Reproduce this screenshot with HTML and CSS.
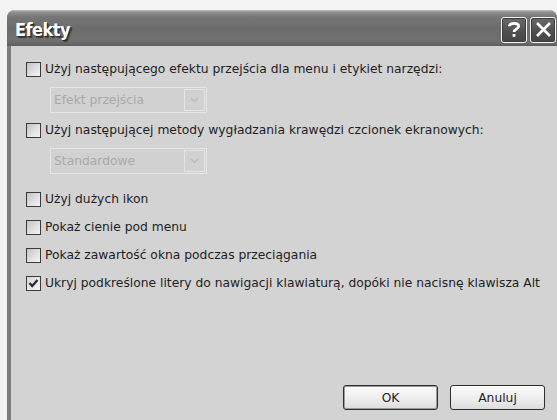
FILE: index.html
```html
<!DOCTYPE html>
<html lang="pl">
<head>
<meta charset="utf-8">
<title>Efekty</title>
<link rel="stylesheet" href="styles.css">
</head>
<body>
<div class="window">
  <div class="titlebar">
    <span class="title">Efekty</span>
    <div class="caption-buttons">
      <button class="cap-btn" aria-label="Pomoc">
        <svg width="14" height="17" viewBox="0 0 14 17"><path d="M2.3 5.2 C2.3 1.3 11.7 1.3 11.7 5.2 C11.7 8 7 8 7 11" fill="none" stroke="#fff" stroke-width="2.7"/><rect x="5.6" y="13" width="2.8" height="2.8" fill="#fff"/></svg>
      </button>
      <button class="cap-btn" aria-label="Zamknij">
        <svg width="17" height="17" viewBox="0 0 17 17"><path d="M2 2 L15 15 M15 2 L2 15" stroke="#fff" stroke-width="2.7"/></svg>
      </button>
    </div>
  </div>
  <div class="client">
    <div class="options">
      <label class="check"><span class="box"></span>Użyj następującego efektu przejścia dla menu i etykiet narzędzi:</label>
      <div class="combo"><span class="combo-text">Efekt przejścia</span><span class="combo-arrow"><svg width="9" height="6" viewBox="0 0 9 6"><path d="M1 1 L4.5 4.5 L8 1" fill="none" stroke="#bdbdbd" stroke-width="1.6"/></svg></span></div>
      <label class="check"><span class="box"></span>Użyj następującej metody wygładzania krawędzi czcionek ekranowych:</label>
      <div class="combo"><span class="combo-text">Standardowe</span><span class="combo-arrow"><svg width="9" height="6" viewBox="0 0 9 6"><path d="M1 1 L4.5 4.5 L8 1" fill="none" stroke="#bdbdbd" stroke-width="1.6"/></svg></span></div>
      <label class="check gap"><span class="box"></span>Użyj dużych ikon</label>
      <label class="check"><span class="box"></span>Pokaż cienie pod menu</label>
      <label class="check"><span class="box"></span>Pokaż zawartość okna podczas przeciągania</label>
      <label class="check"><span class="box checked"><svg width="11" height="11" viewBox="0 0 11 11"><path d="M1.5 5 L4.2 8 L9.5 2" fill="none" stroke="#2a2a2a" stroke-width="2.2"/></svg></span>Ukryj podkreślone litery do nawigacji klawiaturą, dopóki nie nacisnę klawisza Alt</label>
    </div>
    <div class="actions">
      <button class="btn default">OK</button>
      <button class="btn">Anuluj</button>
    </div>
  </div>
</div>
</body>
</html>
```

FILE: styles.css
```css
html, body {
  margin: 0;
  padding: 0;
}

body {
  width: 557px;
  height: 420px;
  overflow: hidden;
  background: #f3f3f3;
  font-family: "DejaVu Sans", "Liberation Sans", sans-serif;
}

.window {
  margin: 10px 0 0 7px;
  height: 410px;
  display: flex;
  flex-direction: column;
  background: #7d7d7d;
  border-radius: 8px 8px 0 0;
  overflow: hidden;
}

.titlebar {
  height: 36px;
  flex: none;
  display: flex;
  align-items: center;
  justify-content: space-between;
  padding: 0 1px 0 8px;
  background: linear-gradient(#a2a2a2 0, #8a8a8a 2px, #767676 6px, #6c6c6c 50%, #707070 85%, #5e5e5e 100%);
  border-top: 1px solid #b8b8b8;
  box-sizing: border-box;
}

.title {
  color: #fff;
  font-family: "DejaVu Sans Condensed", "DejaVu Sans", sans-serif;
  font-weight: bold;
  font-size: 18px;
  letter-spacing: -0.5px;
  text-shadow: 1px 1px 0 #2c2c2c, 2px 2px 1px #3a3a3a;
  margin-top: 2px;
}

.caption-buttons {
  display: flex;
  gap: 3px;
  margin-top: 2px;
}

.cap-btn {
  width: 26px;
  height: 26px;
  padding: 0;
  display: flex;
  align-items: center;
  justify-content: center;
  border: 1px solid #f4f4f4;
  border-radius: 3px;
  background: linear-gradient(#6a6a6a, #4e4e4e 60%, #444);
  box-shadow: inset 0 0 0 1px #3c3c3c;
}

.client {
  flex: 1;
  margin-left: 4px;
  background: #d3d3d3;
  display: flex;
  flex-direction: column;
  justify-content: space-between;
  padding: 16px 12px 10px 15px;
  font-size: 12.3px;
  color: #1e1e1e;
}

.options {
  display: flex;
  flex-direction: column;
  align-items: flex-start;
}

.check {
  display: flex;
  align-items: center;
  height: 15px;
  line-height: 15px;
  white-space: nowrap;
  margin-bottom: 13px;
}

.check.gap {
  margin-top: 8px;
}

.box {
  width: 13px;
  height: 13px;
  flex: none;
  margin-right: 4px;
  border: 1px solid #3b3b3b;
  background: linear-gradient(135deg, #c4c4c4, #e8e8e8 70%, #f2f2f2);
  display: flex;
  align-items: center;
  justify-content: center;
}

.box.checked {
  background: linear-gradient(135deg, #d8d8d8, #f4f4f4);
}

.combo {
  margin: -3px 0 10px 24px;
  width: 157px;
  height: 26px;
  box-sizing: border-box;
  border: 1px solid #e6e6e6;
  background: #d1d1d1;
  display: flex;
  align-items: stretch;
  justify-content: space-between;
}

.combo-text {
  padding-left: 3px;
  line-height: 24px;
  color: #a9a9a9;
}

.combo-arrow {
  width: 19px;
  margin: 1px;
  border: 1px solid #e4e4e4;
  display: flex;
  align-items: center;
  justify-content: center;
}

.actions {
  display: flex;
  justify-content: flex-end;
  gap: 12px;
}

.btn {
  width: 95px;
  height: 25px;
  font-family: inherit;
  font-size: 12.3px;
  color: #1e1e1e;
  border: 1px solid #2e2e2e;
  border-radius: 3px;
  background: linear-gradient(#fbfbfb, #ececec 60%, #dcdcdc);
  padding: 0;
}

.btn.default {
  box-shadow: inset 0 0 0 1px #9a9a9a;
}
```
